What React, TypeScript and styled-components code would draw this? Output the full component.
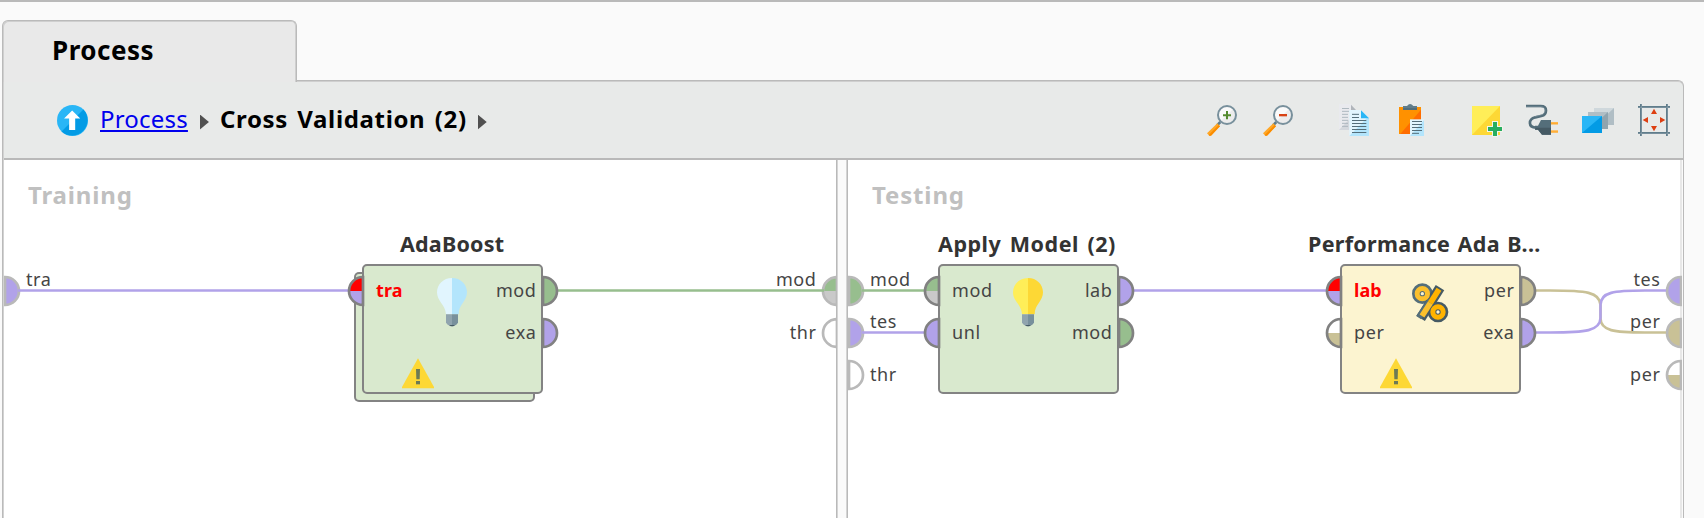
import React from "react";
import styled, { createGlobalStyle } from "styled-components";

const PURPLE = "#b1a2e9";
const GREEN = "#97be8e";
const TAN = "#c9c196";
const GREY = "#c9c9c9";
const RED = "#ff0000";
const WHITE = "#ffffff";

const GlobalStyle = createGlobalStyle`
  * { box-sizing: border-box; }
  body {
    margin: 0;
    background: #fafafa;
    font-family: "Noto Sans", "Open Sans", sans-serif;
    color: #000;
    overflow: hidden;
  }
`;

const Window = styled.div`
  display: flex;
  flex-direction: column;
  width: 1704px;
  height: 518px;
  border-top: 2px solid #b9b9b9;
  padding: 18px 20px 0 2px;
  background: #fafafa;
`;

const Tab = styled.div`
  width: 295px;
  height: 62px;
  padding: 10px 0 0 49px;
  border: 1px solid #bababa;
  border-bottom: 0;
  border-radius: 6px 6px 0 0;
  box-shadow: inset 1px 1px 0 #cfcfcf, inset -1px 0 0 #cfcfcf;
  background: #e9e9e9;
  font-size: 26px;
  font-weight: 700;
  line-height: 38px;
  letter-spacing: 0.5px;
  z-index: 1;
`;

const Panel = styled.div`
  display: flex;
  flex-direction: column;
  flex: 1;
  margin-top: -2px;
  border: 1px solid #bababa;
  border-bottom: 0;
  border-radius: 0 6px 0 0;
  box-shadow: inset 1px 0 0 #d2d2d2, inset 0 1px 0 #cfcfcf;
  padding-left: 1px;
  background: #e8eae9;
`;

const Toolbar = styled.div`
  display: flex;
  align-items: center;
  justify-content: space-between;
  height: 79px;
  padding: 1px 13px 0 52.5px;
  border-bottom: 2px solid #b9b9b9;
`;

const Breadcrumb = styled.nav`
  display: flex;
  align-items: center;
  height: 34px;
`;

const CrumbLink = styled.a`
  margin: 0 12px 0 12.5px;
  color: #0000ee;
  font-size: 24px;
  line-height: 34px;
  letter-spacing: 0.2px;
  text-decoration: underline;
  text-decoration-thickness: 2px;
  text-underline-offset: 2px;
  text-decoration-skip-ink: none;
  transform: translateY(-1px);
`;

const CrumbCurrent = styled.span`
  margin: 0 11px 0 11px;
  font-size: 24px;
  font-weight: 700;
  line-height: 34px;
  letter-spacing: 0.65px;
  word-spacing: 2.5px;
  transform: translateY(-1px);
`;

const Arrow = styled.span`
  width: 9px;
  height: 15px;
  margin-top: 4px;
  background: #505050;
  clip-path: polygon(0 0, 100% 50%, 0 100%);
`;

const Tools = styled.div`
  display: flex;
  gap: 44px;
`;

const ToolGroup = styled.div`
  display: flex;
  gap: 24px;
`;

const ToolIcon = styled.svg.attrs({ viewBox: "0 0 96 96" })`
  display: block;
  width: 32px;
  height: 32px;
  overflow: visible;
`;

const Split = styled.div`
  display: flex;
  flex: 1;
  background: #fafafa;
`;

const Pane = styled.section<{ $last?: boolean }>`
  position: relative;
  width: ${(p) => (p.$last ? "834px" : "832px")};
  overflow: hidden;
  background: #fff;
  ${(p) => (p.$last ? "box-shadow: inset -2px 0 0 #e8e8e8;" : "")}
`;

const Divider = styled.div`
  width: 12px;
  border: solid #b9b9b9;
  border-width: 0 1px;
  box-shadow: inset 1px 0 0 #d4d4d4, inset -1px 0 0 #d4d4d4;
  background: #fafafa;
`;

const PaneTitle = styled.h2`
  margin: 0;
  padding: 18px 0 0 24px;
  color: #c0c0c0;
  font-size: 24px;
  font-weight: 700;
  line-height: 34px;
  letter-spacing: 0.85px;
`;

const Edges = styled.div`
  display: flex;
  justify-content: space-between;
  padding-top: 57.5px;
`;

const EdgeColumn = styled.div`
  display: flex;
  flex-direction: column;
`;

/* The labels of wired ports are lifted above their wire. */
const EdgeSlot = styled.div<{ $end?: boolean; $flush?: boolean }>`
  display: flex;
  flex-direction: ${(p) => (p.$end ? "row-reverse" : "row")};
  align-items: center;
  gap: ${(p) => (p.$end ? "4px" : "5.5px")};
  height: 42px;
  margin-left: ${(p) => (p.$end ? "0" : "-1.5px")};
  margin-right: ${(p) => (p.$end ? (p.$flush ? "-0.5px" : "-2.5px") : "0")};
`;

const Wires = styled.svg`
  position: absolute;
  left: 0;
  top: 0;
  width: 100%;
  height: 100%;
  fill: none;
  stroke-width: 2.6;
`;

const NodeGroup = styled.div<{ $x: number }>`
  position: absolute;
  left: ${(p) => p.$x}px;
  top: 69px;
  width: 181px;
`;

const NodeTitle = styled.div<{ $indent: number; $spacing?: number; $word?: number }>`
  margin: 0 -80px 4.5px ${(p) => p.$indent}px;
  color: #333;
  font-size: 21.5px;
  font-weight: 700;
  line-height: 30px;
  letter-spacing: ${(p) => p.$spacing ?? 0}px;
  word-spacing: ${(p) => p.$word ?? 0}px;
  white-space: nowrap;
`;

const NodeBox = styled.div<{ $fill: string; $stacked?: boolean }>`
  display: flex;
  flex-direction: column;
  height: 130px;
  border: 2px solid #838383;
  border-radius: 5px;
  background: ${(p) => p.$fill};
  ${(p) =>
    p.$stacked
      ? "box-shadow: -8px 8px 0 -2px #d9e9ce, -8px 8px 0 0 #838383;"
      : ""}
`;

const NodeBody = styled.div`
  display: grid;
  grid-template-columns: minmax(0, 1fr) auto minmax(0, 1fr);
  height: 92.5px;
`;

const PortColumn = styled.div`
  display: flex;
  flex-direction: column;
  padding-top: 4px;
`;

const PortSlot = styled.div<{ $end?: boolean }>`
  display: flex;
  flex-direction: ${(p) => (p.$end ? "row-reverse" : "row")};
  align-items: center;
  gap: ${(p) => (p.$end ? "4px" : "11.5px")};
  height: 42px;
  margin: ${(p) => (p.$end ? "0 -17.5px 0 0" : "0 0 0 -17.5px")};
`;

const PortName = styled.span<{ $alert?: boolean; $lift: number }>`
  padding-bottom: ${(p) => p.$lift}px;
  color: ${(p) => (p.$alert ? "#ff0000" : "#454545")};
  font-size: 18px;
  font-weight: ${(p) => (p.$alert ? 700 : 400)};
  line-height: 24px;
  letter-spacing: ${(p) => (p.$alert ? 0.1 : 0.6)}px;
`;

const PortSvg = styled.svg`
  display: block;
  flex: none;
  width: 18px;
  height: 36px;
`;

const Glyph = styled.svg<{ $top?: number; $left?: number; $w: number; $h: number }>`
  display: block;
  width: ${(p) => p.$w}px;
  height: ${(p) => p.$h}px;
  margin: ${(p) => p.$top ?? 0}px 0 0 ${(p) => p.$left ?? 0}px;
`;

type PortData = {
  name: string;
  top: string;
  bottom?: string;
  alert?: boolean;
  wired?: boolean;
};

type PortShapeProps = {
  port: PortData;
  side: "left" | "right";
  edge?: boolean;
};

/* Half disc that bulges to the given side. */
function PortShape({ port, side, edge }: PortShapeProps) {
  return (
    <PortSvg viewBox={side === "left" ? "-16 -18 18 36" : "-2 -18 18 36"}>
      <g transform={side === "left" ? "scale(-1 1)" : undefined}>
        <path d="M0 0V-14A14 14 0 0 1 14 0Z" fill={port.top} />
        <path d="M0 0V14A14 14 0 0 0 14 0Z" fill={port.bottom ?? port.top} />
        <path
          d="M0 -14A14 14 0 0 1 0 14Z"
          fill="none"
          stroke={edge ? "#b9b9b9" : "#818181"}
          strokeWidth="2.7"
        />
      </g>
    </PortSvg>
  );
}

function PaneEdge({ ports, end, flush }: { ports: PortData[]; end?: boolean; flush?: boolean }) {
  return (
    <EdgeColumn>
      {ports.map((port, i) => (
        <EdgeSlot key={i} $end={end} $flush={flush}>
          <PortShape port={port} side={end ? "left" : "right"} edge />
          <PortName $lift={port.wired ? 23 : 1}>{port.name}</PortName>
        </EdgeSlot>
      ))}
    </EdgeColumn>
  );
}

function NodePorts({ ports, end }: { ports: PortData[]; end?: boolean }) {
  return (
    <PortColumn>
      {ports.map((port, i) => (
        <PortSlot key={i} $end={end}>
          <PortShape port={port} side={end ? "right" : "left"} />
          <PortName $alert={port.alert} $lift={1}>{port.name}</PortName>
        </PortSlot>
      ))}
    </PortColumn>
  );
}

function Bulb({ light, dark }: { light: string; dark: string }) {
  return (
    <Glyph $top={12} $left={-1} $w={30} $h={49} viewBox="0 0 90 147">
      <path d="M45 0C19 0 0 19 0 43C0 70 25 79 27 109H45Z" fill={light} />
      <path d="M45 0C71 0 90 19 90 43C90 70 65 79 65 109H45Z" fill={dark} />
      <path d="M27 109H45V145H41C35 143 28 139 27 133Z" fill="#90a4ae" />
      <path d="M45 109H63V133C62 139 55 143 49 145H45Z" fill="#78909c" />
      <path d="M36 141Q45 149 54 141Z" fill="#455a64" />
    </Glyph>
  );
}

function Warning() {
  return (
    <Glyph $left={38} $w={32} $h={31} viewBox="0 0 96 93">
      <path d="M48 1L96 87V91H0V87Z" fill="#fdd835" />
      <path d="M42 33H54L53 64H43Z" fill="#6d7a55" />
      <path d="M42 69H54V79H42Z" fill="#6d7a55" />
    </Glyph>
  );
}

function Percent() {
  return (
    <Glyph $top={17} $left={-1} $w={37} $h={40} viewBox="0 0 111 120" fill="none">
      <circle cx="31" cy="32" r="18" stroke="#546e7a" strokeWidth="26" />
      <path d="M84 14L26 106" stroke="#455a64" strokeWidth="30" />
      <circle cx="78" cy="87" r="18" stroke="#455a64" strokeWidth="26" />
      <path d="M55 52L20 104" stroke="#546e7a" strokeWidth="18" />
      <circle cx="31" cy="32" r="15.500" stroke="#fbc02d" strokeWidth="15" />
      <path d="M81 19L55 60" stroke="#ffb300" strokeWidth="17" />
      <path d="M55 60L30 99" stroke="#fbc02d" strokeWidth="17" />
      <circle cx="78" cy="87" r="15.500" stroke="#ffb300" strokeWidth="15" />
    </Glyph>
  );
}

const UpSvg = styled.svg`
  width: 31px;
  height: 31px;
  margin-top: 1px;
`;

function UpIcon() {
  return (
    <UpSvg viewBox="0 0 92 92">
      <circle cx="46" cy="46" r="46" fill="#29b6f6" />
      <path d="M78.500 13.500A46 46 0 0 1 13.500 78.500Z" fill="#039be5" />
      <path d="M45 16L69 40H54V74H36V40H21Z" fill="#fff" />
    </UpSvg>
  );
}

function Magnifier({ minus }: { minus?: boolean }) {
  return (
    <ToolIcon>
      <path d="M43 54L33 64" stroke="#607d8b" strokeWidth="8" />
      <path d="M34 58L3 88L10 95H15L42 67Z" fill="#ffa726" />
      <path d="M38 63L8 93L10 95H15L42 67Z" fill="#fb8c00" />
      <circle cx="63" cy="33" r="27" fill="#fafafa" />
      <path d="M82 14A27 27 0 0 1 44 52Z" fill="#ececec" />
      <circle cx="63" cy="33" r="27" fill="none" stroke="#78909c" strokeWidth="6" />
      {minus ? (
        <path d="M51 33.500H75" stroke="#d84315" strokeWidth="7" />
      ) : (
        <path d="M51 33.500H75M63 21V46" stroke="#558b2f" strokeWidth="6" />
      )}
    </ToolIcon>
  );
}

function CopyIcon() {
  return (
    <ToolIcon>
      <path d="M3 0H39L54 18V78H3Z" fill="#e9eaee" />
      <path d="M34 46V78H3Z" fill="#d4d7dd" />
      <path d="M39 2L54 18H39Z" fill="#b0b5ba" />
      <path d="M12 13.500H33M12 22H33M12 31H30M12 40H30M12 49H30M12 58H30M12 67H30" stroke="#a2aeb7" strokeWidth="2.500" />
      <path d="M34 18H69L93 43V96H34Z" fill="#e1f5fe" />
      <path d="M93 43V96H34L89 40Z" fill="#b3e5fc" />
      <path d="M69 19L93 43H69Z" fill="#29b6f6" />
      <path d="M42 31H63M42 40.500H63M42 49.500H85M42 58.500H85M42 67.500H85M42 76.500H85M42 85.500H85" stroke="#546e7a" strokeWidth="3" />
    </ToolIcon>
  );
}

function PasteIcon() {
  return (
    <ToolIcon>
      <path d="M15 9H81V90H15Z" fill="#ff9100" />
      <path d="M81 17V90H19Z" fill="#ff6d00" />
      <path d="M27 6H39Q48 -6 58 6H69V18H27Z" fill="#607d8b" />
      <path d="M27 12H69V18H27Z" fill="#546e7a" />
      <path d="M48 46H90V96H48Z" fill="#e1f5fe" />
      <path d="M90 48V96H48Z" fill="#b3e5fc" />
      <path d="M54 52.500H84M54 61.500H84M54 70.500H84M54 79.500H84M54 88H75" stroke="#546e7a" strokeWidth="3" />
    </ToolIcon>
  );
}

function NoteIcon() {
  return (
    <ToolIcon>
      <path d="M6 6H90V93H6Z" fill="#ffee58" />
      <path d="M90 6V93H6Z" fill="#fdd835" />
      <path d="M75 51V99M51 75H99" stroke="#f4f4ec" strokeWidth="18" />
      <path d="M75 54V96M54 75H96" stroke="#27ae60" strokeWidth="12" />
    </ToolIcon>
  );
}

function PlugIcon() {
  return (
    <ToolIcon fill="none">
      <path d="M0 6H44C66 6 64 32 46 36L28 40C6 46 6 70 30 71" stroke="#546e7a" strokeWidth="8" />
      <path d="M0 8H44C62 8 61 29 45 33L27 38" stroke="#78909c" strokeWidth="2" />
      <path d="M27 65H36L45 48H75V92H48L36 77H27Z" fill="#546e7a" />
      <path d="M29 71H75V92H48L36 77H27Z" fill="#455a64" />
      <path d="M75 57.500H96M75 82H96" stroke="#ffb74d" strokeWidth="7" />
      <path d="M75 59.500H96M75 84H96" stroke="#ffa726" strokeWidth="3" />
    </ToolIcon>
  );
}

function LayersIcon() {
  return (
    <ToolIcon>
      <path d="M36 12H96V63H36Z" fill="#cfd8dc" />
      <path d="M96 12V63H42Z" fill="#b0bec5" />
      <path d="M18 24H78V75H18Z" fill="#b0bec5" />
      <path d="M78 24V75H24Z" fill="#90a4ae" />
      <path d="M0 36H60V87H0Z" fill="#29b6f6" />
      <path d="M60 36V87H0Z" fill="#039be5" />
    </ToolIcon>
  );
}

function FitIcon() {
  return (
    <ToolIcon>
      <path d="M9 0V96M87 0V96M0 9H96M0 87H96" stroke="#607d8b" strokeWidth="6" />
      <path d="M10.500 0V96M88.500 0V96M0 10.500H96M0 88.500H96" stroke="#90a4ae" strokeWidth="1.500" />
      <path d="M48 14L57 30H39ZM48 82L57 66H39ZM14 48L30 39V57ZM82 48L66 39V57Z" fill="#dd3f12" />
    </ToolIcon>
  );
}

type NodeProps = {
  x: number;
  title: string;
  indent: number;
  spacing?: number;
  word?: number;
  fill: string;
  stacked?: boolean;
  warning?: boolean;
  icon: React.ReactNode;
  inputs: PortData[];
  outputs: PortData[];
};

function OperatorNode(props: NodeProps) {
  return (
    <NodeGroup $x={props.x}>
      <NodeTitle $indent={props.indent} $spacing={props.spacing} $word={props.word}>
        {props.title}
      </NodeTitle>
      <NodeBox $fill={props.fill} $stacked={props.stacked}>
        <NodeBody>
          <NodePorts ports={props.inputs} />
          {props.icon}
          <NodePorts ports={props.outputs} end />
        </NodeBody>
        {props.warning && <Warning />}
      </NodeBox>
    </NodeGroup>
  );
}

export default function App() {
  return (
    <Window>
      <GlobalStyle />
      <Tab>Process</Tab>
      <Panel>
        <Toolbar>
          <Breadcrumb>
            <UpIcon />
            <CrumbLink>Process</CrumbLink>
            <Arrow />
            <CrumbCurrent>Cross Validation (2)</CrumbCurrent>
            <Arrow />
          </Breadcrumb>
          <Tools>
            <ToolGroup>
              <Magnifier />
              <Magnifier minus />
            </ToolGroup>
            <ToolGroup>
              <CopyIcon />
              <PasteIcon />
            </ToolGroup>
            <ToolGroup>
              <NoteIcon />
              <PlugIcon />
              <LayersIcon />
              <FitIcon />
            </ToolGroup>
          </Tools>
        </Toolbar>
        <Split>
          <Pane>
            <Wires>
              <path d="M14 130.500H346" stroke={PURPLE} />
              <path d="M552 130.500H820" stroke={GREEN} />
            </Wires>
            <PaneTitle>Training</PaneTitle>
            <Edges>
              <PaneEdge ports={[{ name: "tra", top: PURPLE, wired: true }]} />
              <PaneEdge
                end
                ports={[
                  { name: "mod", top: GREEN, bottom: GREY, wired: true },
                  { name: "thr", top: WHITE },
                ]}
              />
            </Edges>
            <OperatorNode
              x={358}
              title="AdaBoost"
              indent={38}
              spacing={0.2}
              fill="#d9e9ce"
              stacked
              warning
              icon={<Bulb light="#e1f5fe" dark="#b3e5fc" />}
              inputs={[{ name: "tra", top: RED, bottom: PURPLE, alert: true }]}
              outputs={[
                { name: "mod", top: GREEN },
                { name: "exa", top: PURPLE },
              ]}
            />
          </Pane>
          <Divider />
          <Pane $last>
            <Wires>
              <path d="M14 130.500H76" stroke={GREEN} />
              <path d="M14 172.500H76" stroke={PURPLE} />
              <path d="M285 130.500H480" stroke={PURPLE} />
              <path d="M687 130.500H702C738 130.500 752 132 752.500 145V158C752.500 171 766 172.500 797 172.500H818" stroke={TAN} />
              <path d="M687 172.500H702C738 172.500 752 171 752.500 158V145C752.500 132 766 130.500 797 130.500H818" stroke={PURPLE} />
            </Wires>
            <PaneTitle>Testing</PaneTitle>
            <Edges>
              <PaneEdge
                ports={[
                  { name: "mod", top: GREEN, wired: true },
                  { name: "tes", top: PURPLE, wired: true },
                  { name: "thr", top: WHITE },
                ]}
              />
              <PaneEdge
                end
                flush
                ports={[
                  { name: "tes", top: PURPLE, wired: true },
                  { name: "per", top: TAN, wired: true },
                  { name: "per", top: WHITE, bottom: TAN },
                ]}
              />
            </Edges>
            <OperatorNode
              x={90}
              title="Apply Model (2)"
              indent={0}
              spacing={0.5}
              word={2.5}
              fill="#d9e9ce"
              icon={<Bulb light="#ffee58" dark="#fdd835" />}
              inputs={[
                { name: "mod", top: GREEN, bottom: GREY },
                { name: "unl", top: PURPLE },
              ]}
              outputs={[
                { name: "lab", top: PURPLE },
                { name: "mod", top: GREEN },
              ]}
            />
            <OperatorNode
              x={492}
              title="Performance Ada B..."
              indent={-32}
              spacing={0.3}
              word={1.5}
              fill="#fcf4d0"
              warning
              icon={<Percent />}
              inputs={[
                { name: "lab", top: RED, bottom: PURPLE, alert: true },
                { name: "per", top: WHITE, bottom: TAN },
              ]}
              outputs={[
                { name: "per", top: TAN },
                { name: "exa", top: PURPLE },
              ]}
            />
          </Pane>
        </Split>
      </Panel>
    </Window>
  );
}
